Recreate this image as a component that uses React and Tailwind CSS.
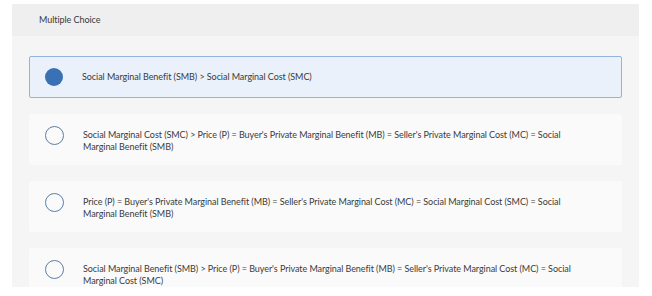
const options = [
  "Social Marginal Benefit (SMB) > Social Marginal Cost (SMC)",
  "Social Marginal Cost (SMC) > Price (P) = Buyer's Private Marginal Benefit (MB) = Seller's Private Marginal Cost (MC) = Social Marginal Benefit (SMB)",
  "Price (P) = Buyer's Private Marginal Benefit (MB) = Seller's Private Marginal Cost (MC) = Social Marginal Cost (SMC) = Social Marginal Benefit (SMB)",
  "Social Marginal Benefit (SMB) > Price (P) = Buyer's Private Marginal Benefit (MB) = Seller's Private Marginal Cost (MC) = Social Marginal Cost (SMC)",
];

export default function App() {
  const selected = 0;

  return (
    <div className="h-[296px] w-[652px] overflow-hidden bg-white pt-[4px] pl-[12px] font-['Lato',sans-serif] text-[9px] tracking-[-0.06px] text-[#3a3a3a]">
      <div className="h-[283px] w-[627px] overflow-hidden bg-[#f5f5f5]">
        <div className="flex h-[32px] items-center bg-[#efefef] pl-[27px]">Multiple Choice</div>

        <div className="px-[17px] pt-[20px]">
          {options.map((text, i) => (
            <div
              key={i}
              className={
                i === selected
                  ? "mb-4 flex items-start rounded-[2px] border border-[#92b4de] bg-[#eaf1fa] py-[11px] pl-[15px]"
                  : "mb-4 flex items-start rounded-[2px] border border-transparent bg-[#fafafa] py-[11px] pl-[15px]"
              }
            >
              {i === selected ? (
                <div className="h-[18px] w-[18px] shrink-0 rounded-full bg-[#3a70b5]" />
              ) : (
                <div className="h-[19px] w-[19px] shrink-0 rounded-full border-[1.5px] border-[#5a7ea6]" />
              )}
              <p className="ml-[19px] max-w-[505px] pt-[3px] leading-[12px]">{text}</p>
            </div>
          ))}
        </div>
      </div>
    </div>
  );
}
